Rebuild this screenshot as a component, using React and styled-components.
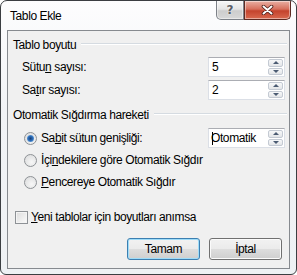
import React from 'react';
import styled, { createGlobalStyle } from 'styled-components';

const GlobalStyle = createGlobalStyle`
  html, body {
    margin: 0;
    padding: 0;
    background: #fff;
  }
  body {
    font-family: "Liberation Sans", Arial, sans-serif;
    font-size: 12px;
    letter-spacing: -0.4px;
    color: #000;
  }
`;

const Window = styled.div`
  box-sizing: border-box;
  width: 297px;
  height: 275px;
  border: 1px solid #3b3e42;
  border-radius: 7px 7px 6px 6px;
  background: linear-gradient(#fdfdfe, #f1f3f6 40%, #eef1f4);
  display: flex;
  flex-direction: column;
  overflow: hidden;
`;

const TitleBar = styled.div`
  height: 29px;
  display: flex;
  align-items: flex-start;
  padding: 0 5px 0 9px;
`;

const Title = styled.div`
  flex: 1;
  padding-top: 7px;
  line-height: 16px;
  font-size: 12px;
`;

const CaptionButton = styled.div`
  box-sizing: border-box;
  height: 19px;
  width: ${p => (p.close ? '47px' : '28px')};
  border: 1px solid ${p => (p.close ? '#5e2a22' : '#7d8188')};
  border-top: none;
  border-radius: ${p => (p.close ? '0 0 5px 0' : '0 0 0 5px')};
  background: ${p =>
    p.close
      ? 'linear-gradient(#eab0a4, #d7705d 45%, #c4432d 55%, #d9694f)'
      : 'linear-gradient(#f7f7f7, #e4e4e4 45%, #cdcdcd 55%, #d8d8d8)'};
  box-shadow: inset 0 0 0 1px rgba(255, 255, 255, 0.45);
  display: flex;
  align-items: center;
  justify-content: center;
  font-family: "DejaVu Sans", sans-serif;
  font-weight: bold;
  font-size: 12px;
  color: #5a5e66;
  text-shadow: 0 0 2px #fff;
  letter-spacing: 0;
`;

const Client = styled.div`
  flex: 1;
  margin: 0 6px 5px 6px;
  border: 1px solid #868a8f;
  background: #f0f0f0;
  padding: 6px 4px 0 5px;
  display: flex;
  flex-direction: column;
`;

const GroupHeader = styled.div`
  display: flex;
  align-items: center;
  gap: 5px;
  height: 16px;
  margin-top: ${p => p.top || 0}px;
`;

const Rule = styled.div`
  flex: 1;
  height: 1px;
  margin-top: -2px;
  margin-right: -2px;
  background: #d5dbe1;
  border-bottom: 1px solid #fff;
`;

const Row = styled.div`
  display: flex;
  align-items: center;
  height: 20px;
  padding-left: ${p => p.indent || 0}px;
  margin-top: ${p => p.top || 0}px;
`;

const Label = styled.span`
  flex: 1;
`;

const Key = styled.span`
  text-decoration: underline;
  text-underline-offset: 1px;
`;

const SpinField = styled.div`
  box-sizing: border-box;
  width: 77px;
  height: 20px;
  background: #fff;
  border: 1px solid #dbdfe6;
  border-top-color: #abadb3;
  display: flex;
  align-items: stretch;
  padding: 1px;
`;

const SpinText = styled.div`
  flex: 1;
  display: flex;
  align-items: center;
  padding-left: 2px;
`;

const Caret = styled.span`
  display: inline-block;
  width: 1px;
  height: 13px;
  background: #000;
  margin-right: -2px;
`;

const SpinButtons = styled.div`
  width: 15px;
  display: flex;
  flex-direction: column;
  gap: 1px;
`;

const SpinButton = styled.div`
  flex: 1;
  box-sizing: border-box;
  border: 1px solid #c4cad3;
  border-radius: 2px;
  background: linear-gradient(#f7f8f9, #e3e5e8);
  display: flex;
  align-items: center;
  justify-content: center;
`;

const Arrow = styled.div`
  width: 0;
  height: 0;
  border-left: 3px solid transparent;
  border-right: 3px solid transparent;
  ${p =>
    p.down
      ? 'border-top: 3px solid #4b5b72;'
      : 'border-bottom: 3px solid #4b5b72;'}
`;

const Radio = styled.span`
  box-sizing: border-box;
  width: 13px;
  height: 13px;
  border-radius: 50%;
  border: 1px solid #8e9296;
  background: radial-gradient(circle at 60% 65%, #f7f7f7, #d8d9da);
  margin-right: 4px;
  display: flex;
  align-items: center;
  justify-content: center;
  &::after {
    content: '';
    display: ${p => (p.checked ? 'block' : 'none')};
    width: 7px;
    height: 7px;
    border-radius: 50%;
    background: radial-gradient(circle at 50% 50%, #1a3f73 0%, #2c6cb8 45%, #97c9f0 100%);
  }
`;

const Checkbox = styled.span`
  box-sizing: border-box;
  width: 13px;
  height: 13px;
  border: 1px solid #8e9296;
  background: linear-gradient(135deg, #dcdcdc, #fbfbfb);
  box-shadow: inset 0 0 0 1px #f4f4f4;
  margin-right: 3px;
`;

const ButtonRow = styled.div`
  display: flex;
  justify-content: flex-end;
  gap: 9px;
  margin-top: 11px;
  padding-right: 3px;
`;

const Button = styled.div`
  box-sizing: border-box;
  width: 73px;
  height: 22px;
  border: 1px solid ${p => (p.primary ? '#3c7fb1' : '#707070')};
  border-radius: 3px;
  background: linear-gradient(#f2f2f2, #ebebeb 48%, #dddddd 52%, #cfcfcf);
  box-shadow: inset 0 0 0 1px ${p => (p.primary ? '#9edcf9' : '#fbfbfb')};
  display: flex;
  align-items: center;
  justify-content: center;
`;

function Spinner({ value, caret }) {
  return (
    <SpinField>
      <SpinText>
        {caret && <Caret />}
        {value}
      </SpinText>
      <SpinButtons>
        <SpinButton>
          <Arrow />
        </SpinButton>
        <SpinButton>
          <Arrow down />
        </SpinButton>
      </SpinButtons>
    </SpinField>
  );
}

export default function App() {
  return (
    <>
      <GlobalStyle />
      <Window>
        <TitleBar>
          <Title>Tablo Ekle</Title>
          <CaptionButton>?</CaptionButton>
          <CaptionButton close>
            <svg width="13" height="10" viewBox="0 0 13 10">
              <path d="M2.5 1.5 L10.5 8.5 M10.5 1.5 L2.5 8.5" stroke="#4a1c16" strokeWidth="3.6" strokeLinecap="round" />
              <path d="M2.5 1.5 L10.5 8.5 M10.5 1.5 L2.5 8.5" stroke="#fff" strokeWidth="2" strokeLinecap="round" />
            </svg>
          </CaptionButton>
        </TitleBar>
        <Client>
          <GroupHeader>
            <span>Tablo boyutu</span>
            <Rule />
          </GroupHeader>
          <Row indent={9} top={4}>
            <Label>
              Sütu<Key>n</Key> sayısı:
            </Label>
            <Spinner value="5" />
          </Row>
          <Row indent={9} top={3}>
            <Label>
              Sa<Key>t</Key>ır sayısı:
            </Label>
            <Spinner value="2" />
          </Row>
          <GroupHeader top={7}>
            <span>Otomatik Sığdırma hareketi</span>
            <Rule />
          </GroupHeader>
          <Row indent={11} top={5}>
            <Radio checked />
            <Label>
              Sa<Key>b</Key>it sütun genişliği:
            </Label>
            <Spinner value="Otomatik" caret />
          </Row>
          <Row indent={11} top={2}>
            <Radio />
            <Label>
              İçi<Key>n</Key>dekilere göre Otomatik Sığdır
            </Label>
          </Row>
          <Row indent={11} top={2}>
            <Radio />
            <Label>
              <Key>P</Key>encereye Otomatik Sığdır
            </Label>
          </Row>
          <Row indent={2} top={15}>
            <Checkbox />
            <Label>
              <Key>Y</Key>eni tablolar için boyutları anımsa
            </Label>
          </Row>
          <ButtonRow>
            <Button primary>Tamam</Button>
            <Button>İptal</Button>
          </ButtonRow>
        </Client>
      </Window>
    </>
  );
}
